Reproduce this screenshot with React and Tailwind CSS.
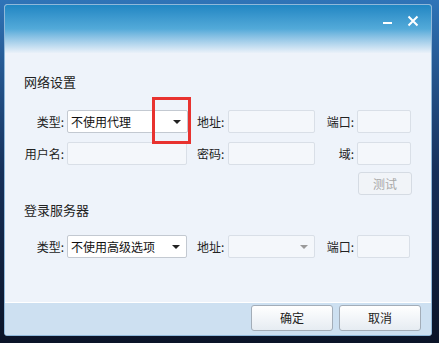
const Label = ({ w, align = 'right', children }) => (
  <div className={`shrink-0 ${w} ${align === 'right' ? 'text-right pr-[3px]' : 'text-left'} text-[12px] text-[#222]`}>
    {children}
  </div>
);

const Field = ({ w }) => (
  <div className={`shrink-0 ${w} h-[23px] rounded-[2px] border border-[#d9dfe7] bg-[#f4f7fb]`}></div>
);

const Arrow = ({ color = 'border-t-[#222]' }) => (
  <div className={`w-0 h-0 border-l-[4px] border-r-[4px] border-t-[4px] border-l-transparent border-r-transparent ${color}`}></div>
);

const Select = ({ w, value, disabled }) => (
  <div
    className={`shrink-0 ${w} h-[23px] rounded-[2px] border flex items-center justify-between pl-[3px] pr-[6px] text-[12px] ${
      disabled ? 'border-[#d9dfe7] bg-[#f4f7fb]' : 'border-[#c3c9d1] bg-white text-[#111]'
    }`}
  >
    <span>{value}</span>
    <Arrow color={disabled ? 'border-t-[#9a9a9a]' : 'border-t-[#222]'} />
  </div>
);

const App = () => {
  return (
    <div
      className="w-[439px] h-[343px] pt-[4px] pl-[4px] bg-gradient-to-b from-[#2f74b8] via-[#16305a] to-[#0b1428]"
      style={{ fontFamily: '"Noto Sans CJK SC", "Noto Sans", sans-serif' }}
    >
      <div className="relative w-[428px] h-[332px] rounded-[3px] overflow-hidden flex flex-col border border-[#8fb8da] bg-[#eef3fa]">
        {/* Title bar */}
        <div className="h-[48px] shrink-0 flex justify-end items-start gap-[15px] pr-[12px] pt-[7px] bg-gradient-to-b from-[#1f86c3] via-[#53aad9] to-[#eaf1f9]">
          <div className="mt-[10px] w-[9px] h-[2px] bg-white"></div>
          <svg width="12" height="12" viewBox="0 0 12 12" className="mt-[3px]">
            <path d="M1.5 1.5 L10.5 10.5 M10.5 1.5 L1.5 10.5" stroke="white" strokeWidth="2" />
          </svg>
        </div>

        {/* Content */}
        <div className="flex-1 flex flex-col">
          <div className="mt-[20px] pl-[19px] text-[13px] leading-[18px] text-[#222]">网络设置</div>

          <div className="mt-[19px] flex items-center">
            <Label w="w-[62px]">类型:</Label>
            <Select w="w-[121px]" value="不使用代理" />
            <Label w="w-[40px]" align="left"><span className="pl-[9px]">地址:</span></Label>
            <Field w="w-[87px]" />
            <Label w="w-[42px]">端口:</Label>
            <Field w="w-[54px]" />
          </div>

          <div className="mt-[9px] flex items-center">
            <Label w="w-[62px]">用户名:</Label>
            <Field w="w-[120px]" />
            <Label w="w-[41px]" align="left"><span className="pl-[10px]">密码:</span></Label>
            <Field w="w-[87px]" />
            <Label w="w-[42px]">域:</Label>
            <Field w="w-[54px]" />
          </div>

          <div className="mt-[7px] flex justify-end pr-[19px]">
            <div className="w-[54px] h-[23px] rounded-[3px] border border-[#d5dbe3] bg-[#f1f4f8] flex items-center justify-center text-[12px] text-[#a8a8a8]">
              测试
            </div>
          </div>

          <div className="mt-[6px] pl-[19px] text-[13px] leading-[18px] text-[#222]">登录服务器</div>

          <div className="mt-[16px] flex items-center">
            <Label w="w-[62px]">类型:</Label>
            <Select w="w-[120px]" value="不使用高级选项" />
            <Label w="w-[41px]" align="left"><span className="pl-[10px]">地址:</span></Label>
            <Select w="w-[87px]" value="" disabled />
            <Label w="w-[42px]">端口:</Label>
            <Field w="w-[53px]" />
          </div>
        </div>

        {/* Footer */}
        <div className="h-[33px] shrink-0 border-t border-white bg-[#cde0f1] flex justify-end items-start gap-[6px] pr-[10px] pt-[2px]">
          <button className="w-[82px] h-[26px] rounded-[3px] border border-[#a3adb8] bg-gradient-to-b from-white to-[#e6ecf2] text-[12px] text-[#222]">
            确定
          </button>
          <button className="w-[82px] h-[26px] rounded-[3px] border border-[#a3adb8] bg-gradient-to-b from-white to-[#e6ecf2] text-[12px] text-[#222]">
            取消
          </button>
        </div>

        {/* Red highlight */}
        <div className="absolute left-[147px] top-[92px] w-[39px] h-[47px] border-[3px] border-[#e8322f]"></div>
      </div>
    </div>
  );
};

export default App;
